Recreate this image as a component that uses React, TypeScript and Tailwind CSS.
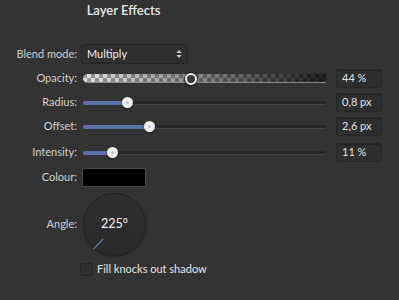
import React from 'react';

function Row({ label, className, children }: { label: string; className: string; children?: React.ReactNode }) {
  return (
    <div className={`flex items-center ${className}`}>
      <div className="w-[77px] shrink-0 text-right text-[#cfcfcf]">{label}</div>
      {children}
    </div>
  );
}

function ValueBox({ value }: { value: string }) {
  return (
    <div className="ml-[10px] w-[46px] h-[19px] flex items-center pl-[5px] rounded-[3px] bg-[#2e2e2e] border border-[#262626] shadow-[inset_0_1px_0_rgba(0,0,0,0.25)] text-[#e2e2e2]">
      {value}
    </div>
  );
}

function Slider({ pos, value }: { pos: number; value: string }) {
  return (
    <>
      <div className="ml-[6px] w-[243px] h-[11px] relative flex items-center">
        <div className="w-full h-[4px] rounded-full bg-[#262626] border-b border-[#444]" />
        <div className="absolute left-0 h-[4px] rounded-full bg-[#5a72a6]" style={{ width: pos }} />
        <div
          className="absolute top-0 w-[11px] h-[11px] rounded-full bg-[#f2f2f2] shadow-[0_1px_2px_rgba(0,0,0,0.5)] flex items-center justify-center"
          style={{ left: pos - 5 }}
        >
          <div className="w-[3px] h-[3px] rounded-full bg-[#b8c2dc]" />
        </div>
      </div>
      <ValueBox value={value} />
    </>
  );
}

export default function App() {
  return (
    <div className="w-[399px] h-[300px] bg-[#333333] text-[11px] font-['Lato','Open_Sans',sans-serif] flex flex-col">
      {/* Title */}
      <div className="h-[22px] w-[247px] flex items-center justify-center text-[13px] font-semibold text-[#e8e8e8]">
        Layer Effects
      </div>

      {/* Blend mode */}
      <Row label="Blend mode:" className="mt-[22px] h-[20px]">
        <div className="ml-[4px] w-[107px] h-[20px] flex items-center justify-between pl-[5px] pr-[5px] rounded-[3px] bg-[#2f2f2f] border border-[#252525] text-[#ececec]">
          <span>Multiply</span>
          <svg width="6" height="10" viewBox="0 0 6 10" fill="#cfcfcf">
            <path d="M3 1 L5.5 4 H0.5 Z" />
            <path d="M3 9 L5.5 6 H0.5 Z" />
          </svg>
        </div>
      </Row>

      {/* Opacity */}
      <Row label="Opacity:" className="mt-[5px] h-[19px]">
        <div className="ml-[6px] w-[243px] h-[12px] relative flex items-center">
          <div className="w-full h-[9px] rounded-l-full rounded-r-[3px] overflow-hidden relative bg-[image:repeating-conic-gradient(#e2e2e2_0_25%,#9a9a9a_0_50%)] bg-[length:8px_8px] border-b border-[#8a8a8a]">
            <div className="absolute inset-0 bg-linear-to-r from-transparent to-black/85" />
          </div>
          <div className="absolute left-[102px] top-0 w-[12px] h-[12px] rounded-full border-2 border-[#f0f0f0] bg-[#3a3a3a] shadow-[0_0_0_1px_rgba(0,0,0,0.6)]" />
        </div>
        <ValueBox value="44 %" />
      </Row>

      {/* Radius */}
      <Row label="Radius:" className="mt-[5px] h-[19px]">
        <Slider pos={44} value="0,8 px" />
      </Row>

      {/* Offset */}
      <Row label="Offset:" className="mt-[5px] h-[19px]">
        <Slider pos={66} value="2,6 px" />
      </Row>

      {/* Intensity */}
      <Row label="Intensity:" className="mt-[7px] h-[19px]">
        <Slider pos={29} value="11 %" />
      </Row>

      {/* Colour */}
      <Row label="Colour:" className="mt-[6px] h-[19px]">
        <div className="ml-[5px] w-[64px] h-[19px] bg-black border border-[#4a4a4a] rounded-[1px]" />
      </Row>

      {/* Angle */}
      <Row label="Angle:" className="mt-[6px] h-[63px]">
        <div className="ml-[6px] w-[63px] h-[63px] rounded-full relative flex items-center justify-center bg-linear-to-b from-[#2f2f2f] to-[#2a2a2a] border border-[#222] shadow-[0_1px_2px_rgba(0,0,0,0.4)]">
          <span className="text-[12.5px] text-[#f0f0f0]">225°</span>
          <svg className="absolute inset-0" width="63" height="63" viewBox="0 0 63 63">
            <line x1="9.5" y1="55" x2="19" y2="45" stroke="#5a72a6" strokeWidth="1.5" />
          </svg>
        </div>
      </Row>

      {/* Checkbox */}
      <div className="mt-[7px] ml-[80px] flex items-center h-[13px]">
        <div className="w-[13px] h-[13px] rounded-[3px] bg-[#2e2e2e] border border-[#232323]" />
        <span className="ml-[4px] text-[#e6e6e6]">Fill knocks out shadow</span>
      </div>
    </div>
  );
}
